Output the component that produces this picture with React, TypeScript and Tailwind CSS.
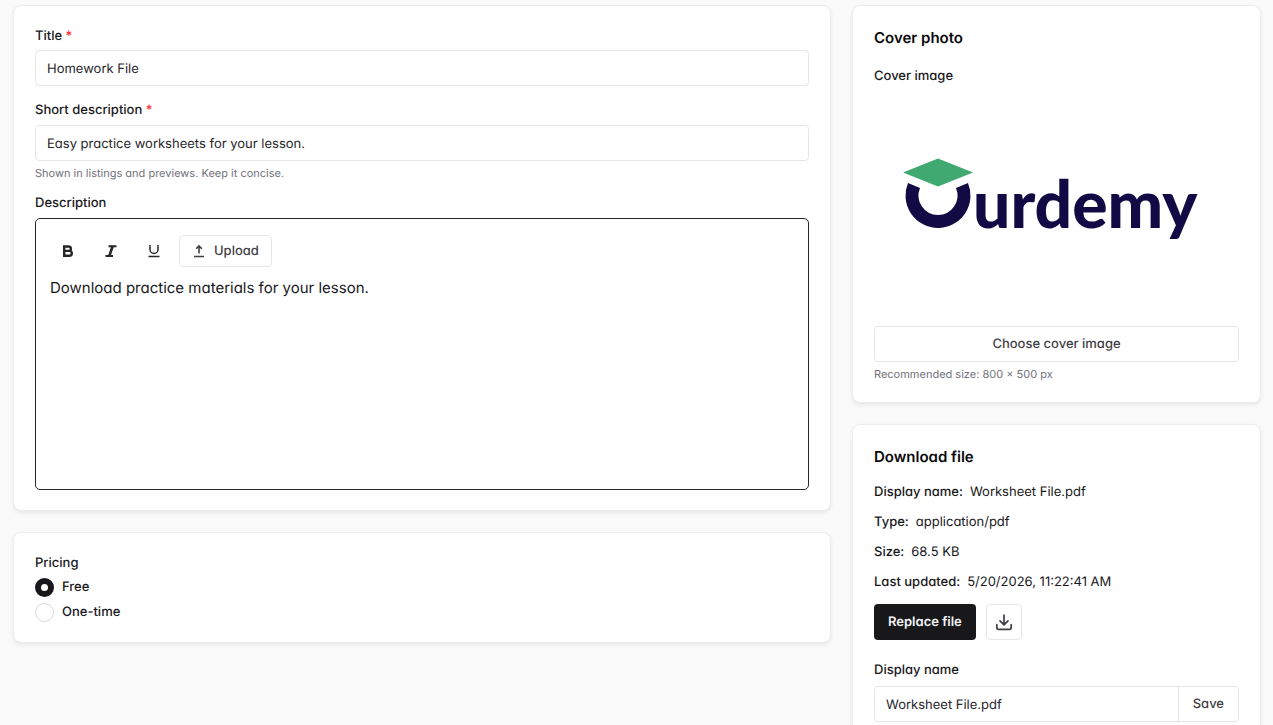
import type { ReactNode } from "react";

const LABEL = "block text-[13px] font-medium leading-[18px] text-zinc-900";
const INPUT =
  "h-9 w-full rounded-[4px] border border-[#e6e6e6] bg-white px-[11px] pt-px text-[13px] leading-5 text-zinc-800 outline-none";
const BUTTON =
  "flex items-center justify-center rounded-[4px] border border-[#e6e6e6] bg-white text-[13px] font-medium leading-5 text-zinc-700";
const ICON_BUTTON =
  "flex h-8 w-9 items-center justify-center rounded-[4px] text-zinc-800";

const fileInfo = [
  { label: "Display name:", value: "Worksheet File.pdf" },
  { label: "Type:", value: "application/pdf" },
  { label: "Size:", value: "68.5 KB" },
  { label: "Last updated:", value: "5/20/2026, 11:22:41 AM" },
];

type CardProps = {
  children: ReactNode;
};

const Card = ({ children }: CardProps) => (
  <section className="rounded-lg border border-[#ededed] bg-white px-[21px] pb-5 pt-[21px] shadow-[0_2px_4px_rgba(0,0,0,0.08)]">
    {children}
  </section>
);

const Required = () => <span className="text-red-500">*</span>;

const Logo = () => (
  <svg viewBox="0 0 365 228" className="w-full" role="img" aria-label="Ourdemy">
    <path d="M29 81.500L64 67.500L99 81.500L64 95.500Z" fill="#40a971" />
    <path
      d="M40 94.500A26 26 0 1 0 88 94.500"
      fill="none"
      stroke="#120a44"
      strokeWidth="13"
    />
    <text
      x="99"
      y="137"
      fill="#120a44"
      fontFamily="Lato, sans-serif"
      fontWeight="900"
      fontSize="66"
    >
      urdemy
    </text>
  </svg>
);

const BoldIcon = () => (
  <svg width="16" height="16" viewBox="0 0 16 16" fill="none" stroke="currentColor" strokeWidth="2.400">
    <path d="M4.200 3.500h4.500a2.200 2.200 0 0 1 0 4.400H4.200zM4.200 7.900h5.200a2.400 2.400 0 0 1 0 4.800H4.200z" />
  </svg>
);

const ItalicIcon = () => (
  <svg width="16" height="16" viewBox="0 0 16 16" fill="none" stroke="currentColor" strokeWidth="2">
    <path d="M5.500 3.200h8M2.500 13H10" />
    <path d="M9.700 3L6.300 13" strokeWidth="2.600" />
  </svg>
);

const UnderlineIcon = () => (
  <svg width="16" height="16" viewBox="0 0 16 16" fill="none" stroke="currentColor" strokeWidth="1.500">
    <path d="M4 2v4.500a4 4 0 0 0 8 0V2M2.500 13.500h11" />
  </svg>
);

const UploadIcon = () => (
  <svg width="14" height="14" viewBox="0 0 14 14" fill="none" stroke="currentColor" strokeWidth="1.600">
    <path d="M7 9.500V2.200M4.200 4.800L7 2l2.800 2.800M2 12.500h10" />
  </svg>
);

const DownloadIcon = () => (
  <svg
    width="18"
    height="18"
    viewBox="0 0 18 18"
    fill="none"
    stroke="currentColor"
    strokeWidth="1.700"
    strokeLinecap="round"
    strokeLinejoin="round"
  >
    <path d="M9 2v9.500M5 7.800L9 11.800 13 7.800M1.800 11.500v3a1.800 1.800 0 0 0 1.800 1.800h10.800a1.800 1.800 0 0 0 1.800-1.800v-3" />
  </svg>
);

type PlanProps = {
  label: string;
  value: string;
  defaultChecked?: boolean;
};

const PlanOption = ({ label, value, defaultChecked }: PlanProps) => (
  <label className="flex w-fit items-center gap-2 text-[13px] font-medium leading-[19px] text-zinc-900">
    <input
      type="radio"
      name="pricing"
      value={value}
      defaultChecked={defaultChecked}
      className="h-[19px] w-[19px] appearance-none rounded-full border border-[#d9d9d9] bg-white checked:border-[6px] checked:border-[#18181b]"
    />
    {label}
  </label>
);

const DetailsCard = () => (
  <Card>
    <label htmlFor="title" className={LABEL}>
      Title <Required />
    </label>
    <input id="title" className={`mt-[5px] ${INPUT}`} defaultValue="Homework File" />

    <label htmlFor="summary" className={`mt-[15px] ${LABEL}`}>
      Short description <Required />
    </label>
    <input
      id="summary"
      className={`mt-[6px] ${INPUT}`}
      defaultValue="Easy practice worksheets for your lesson."
    />
    <p className="mt-1 text-[11px] leading-4 text-zinc-500">
      Shown in listings and previews. Keep it concise.
    </p>

    <label htmlFor="description" className={`mt-[13px] ${LABEL}`}>
      Description
    </label>
    <div className="mt-[6px] flex h-[272px] flex-col rounded-[5px] border border-zinc-800 px-[14px] py-4">
      <div className="flex items-center gap-[7px]">
        <button type="button" aria-label="Bold" className={ICON_BUTTON}>
          <BoldIcon />
        </button>
        <button type="button" aria-label="Italic" className={ICON_BUTTON}>
          <ItalicIcon />
        </button>
        <button type="button" aria-label="Underline" className={ICON_BUTTON}>
          <UnderlineIcon />
        </button>
        <button type="button" className={`h-8 gap-2 px-3 ${BUTTON}`}>
          <UploadIcon />
          Upload
        </button>
      </div>
      <textarea
        id="description"
        className="mt-[10px] w-full grow resize-none text-[15px] leading-[22px] text-zinc-900 outline-none"
        defaultValue="Download practice materials for your lesson."
      />
    </div>
  </Card>
);

const PricingCard = () => (
  <Card>
    <fieldset>
      <legend className={LABEL}>Pricing</legend>
      <div className="mt-[6px] flex flex-col gap-[6px]">
        <PlanOption label="Free" value="free" defaultChecked />
        <PlanOption label="One-time" value="one-time" />
      </div>
    </fieldset>
  </Card>
);

const CoverCard = () => (
  <Card>
    <h2 className="text-[15px] font-semibold leading-[22px] text-zinc-950">Cover photo</h2>
    <p className={`mt-[18px] ${LABEL}`}>Cover image</p>
    <div className="mt-[6px]">
      <Logo />
    </div>
    <button type="button" className={`mt-[7px] h-9 w-full ${BUTTON}`}>
      Choose cover image
    </button>
    <p className="mt-1 text-[11px] leading-4 text-zinc-500">Recommended size: 800 × 500 px</p>
  </Card>
);

const DownloadCard = () => (
  <Card>
    <h2 className="text-[15px] font-semibold leading-[22px] text-zinc-950">Download file</h2>
    <dl className="mt-[15px] flex flex-col gap-3">
      {fileInfo.map(({ label, value }) => (
        <div key={label} className="flex gap-[7px] text-[13px] leading-[18px] text-zinc-900">
          <dt className="font-medium">{label}</dt>
          <dd>{value}</dd>
        </div>
      ))}
    </dl>
    <div className="mt-[13px] flex gap-[10px]">
      <button
        type="button"
        className="h-9 rounded-[4px] bg-[#18181b] px-[14px] text-[13px] font-semibold leading-5 text-zinc-100"
      >
        Replace file
      </button>
      <button type="button" aria-label="Download" className={`h-9 w-9 ${BUTTON}`}>
        <DownloadIcon />
      </button>
    </div>
    <label htmlFor="display-name" className={`mt-[21px] ${LABEL}`}>
      Display name
    </label>
    <div className="mt-[7px] flex h-9 rounded-[4px] border border-[#e6e6e6]">
      <input
        id="display-name"
        className="min-w-0 grow px-[11px] pt-px text-[13px] leading-5 text-zinc-800 outline-none"
        defaultValue="Worksheet File.pdf"
      />
      <button
        type="button"
        className="border-l border-[#e6e6e6] px-[14px] text-[13px] font-medium leading-5 text-zinc-700"
      >
        Save
      </button>
    </div>
  </Card>
);

const App = () => (
  <main className="h-screen overflow-hidden bg-[#fafafa] pb-5 pl-[13px] pr-3 pt-[5px] font-['Inter',sans-serif] [font-feature-settings:'cv11'] [&_*]:[text-rendering:geometricPrecision]">
    <div className="grid grid-cols-[2fr_1fr] items-start gap-[21px]">
      <div className="flex flex-col gap-[21px]">
        <DetailsCard />
        <PricingCard />
      </div>
      <div className="flex flex-col gap-[21px]">
        <CoverCard />
        <DownloadCard />
      </div>
    </div>
  </main>
);

export default App;
